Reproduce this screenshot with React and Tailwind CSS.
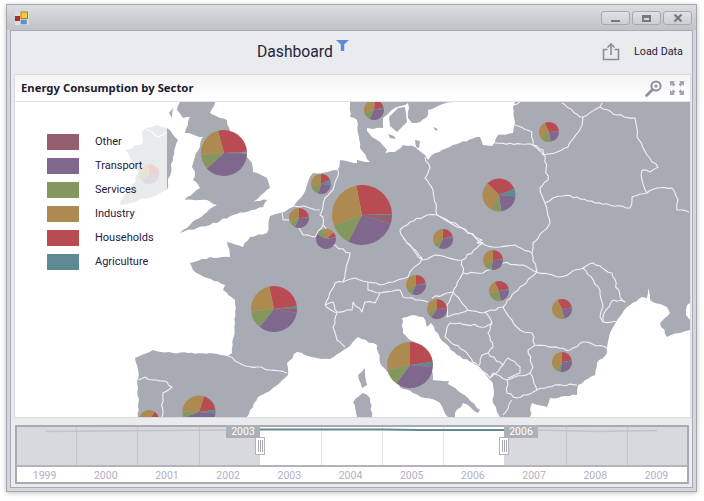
const C = { h: "#b94c53", a: "#5d8a92", o: "#955f70", t: "#7f678e", s: "#84975f", i: "#ad8a50" };

const pies = [
  [224, 153, 23, -15, [["h", 87], ["a", 89], ["o", 91], ["t", 228], ["s", 265], ["i", 345]]],
  [362, 215, 30, -11, [["h", 88], ["a", 90], ["o", 107], ["t", 207], ["s", 249], ["i", 349]]],
  [274, 309, 23, -12, [["h", 83], ["a", 90], ["o", 100], ["t", 219], ["s", 264], ["i", 348]]],
  [410, 365, 23, 0, [["h", 82], ["a", 93], ["o", 95], ["t", 216], ["s", 257], ["i", 360]]],
  [199, 412, 16.5, 18, [["h", 82], ["a", 95], ["t", 250], ["s", 272], ["i", 378]]],
  [149, 420, 10, 35, [["h", 110], ["t", 230], ["s", 270], ["i", 395]]],
  [499, 195, 16.5, -45, [["h", 68], ["a", 95], ["t", 172], ["s", 208], ["i", 315]]],
  [374, 110, 10, 5, [["h", 75], ["a", 88], ["t", 205], ["s", 255], ["i", 365]]],
  [321, 184, 10, 0, [["h", 65], ["a", 95], ["t", 195], ["s", 255], ["i", 360]]],
  [299, 218, 10, 0, [["h", 85], ["a", 90], ["t", 205], ["s", 245], ["i", 360]]],
  [326, 239, 10, -20, [["i", 50], ["h", 80], ["a", 82], ["t", 300], ["s", 340]]],
  [443, 239, 10, 0, [["h", 72], ["a", 78], ["t", 205], ["s", 245], ["i", 360]]],
  [416, 285, 10, 0, [["h", 80], ["a", 85], ["t", 205], ["s", 240], ["i", 360]]],
  [437, 309, 10, 0, [["h", 85], ["t", 215], ["s", 250], ["i", 360]]],
  [493, 260, 10, 0, [["h", 85], ["a", 88], ["t", 190], ["s", 240], ["i", 360]]],
  [499, 291, 10, -25, [["h", 80], ["a", 90], ["t", 170], ["s", 255], ["i", 335]]],
  [562, 309, 10, -25, [["h", 80], ["t", 165], ["s", 180], ["i", 335]]],
  [562, 362, 10, 0, [["h", 82], ["a", 90], ["t", 190], ["s", 215], ["i", 360]]],
  [549, 132, 10, -25, [["h", 85], ["t", 170], ["s", 230], ["i", 335]]],
  [149, 174, 10, -5, [["h", 90], ["t", 220], ["s", 270], ["i", 355]]],
];

function pt(cx, cy, r, deg) {
  const a = ((deg - 90) * Math.PI) / 180;
  return `${(cx + r * Math.cos(a)).toFixed(2)} ${(cy + r * Math.sin(a)).toFixed(2)}`;
}

function Pie({ p }) {
  const [cx, cy, r, start, parts] = p;
  let from = start;
  return (
    <g>
      {parts.map(([k, to], i) => {
        const d = `M${cx} ${cy}L${pt(cx, cy, r, from)}A${r} ${r} 0 ${to - from > 180 ? 1 : 0} 1 ${pt(cx, cy, r, to)}Z`;
        from = to;
        return <path key={i} d={d} fill={C[k]} />;
      })}
    </g>
  );
}

// Breaks each straight run of a coast or border into short wobbly pieces.
function rough(d, amp) {
  const nums = d.match(/-?\d+(\.\d+)?/g).map(Number);
  const closed = /Z\s*$/.test(d);
  const pts = [];
  for (let i = 0; i < nums.length; i += 2) pts.push([nums[i], nums[i + 1]]);
  if (closed) pts.push(pts[0]);
  const onEdge = (a, b) =>
    (a[0] >= 690 && b[0] >= 690) || (a[1] <= 102 && b[1] <= 102) || (a[1] >= 417 && b[1] >= 417);
  let seed = nums.length * 7 + nums[0];
  const rnd = () => {
    seed = (seed * 9301 + 49297) % 233280;
    return seed / 233280 - 0.5;
  };
  const out = [pts[0]];
  for (let i = 1; i < pts.length; i++) {
    const a = pts[i - 1];
    const b = pts[i];
    const dx = b[0] - a[0];
    const dy = b[1] - a[1];
    const len = Math.hypot(dx, dy);
    if (!onEdge(a, b) && len > 4) {
      const n = Math.floor(len / 3.5);
      for (let k = 1; k < n; k++) {
        const t = k / n;
        const off = rnd() * amp * 2;
        out.push([a[0] + dx * t - (dy / len) * off, a[1] + dy * t + (dx / len) * off]);
      }
    }
    out.push(b);
  }
  return "M" + out.map((p) => `${p[0].toFixed(1)} ${p[1].toFixed(1)}`).join("L") + (closed ? "Z" : "");
}

const land = [
  "M350 102L350 117 357 120 358 133 360 148 370 162 357 160 357 163 350 162 340 160 338 170 328 172 313 173 308 182 303 195 293 207 280 213 270 216 267 233 250 237 243 247 227 242 230 257 210 257 190 263 193 270 207 278 225 285 223 290 235 300 235 323 232 353 228 356 210 353 173 353 153 350 135 358 138 370 138 417 247 417 258 397 273 388 288 375 287 363 297 352 317 358 330 359 347 348 358 337 377 345 380 363 400 387 413 393 425 398 435 400 440 403 448 417 455 417 455 413 463 403 468 405 478 413 480 410 468 398 448 384 449 381 433 380 432 360 420 347 403 333 402 318 412 315 423 317 427 327 431 323 440 338 457 355 473 363 482 370 493 383 493 403 497 412 500 417 530 417 532 403 547 407 550 398 577 395 578 385 595 375 597 363 607 353 610 333 613 327 627 307 642 297 647 298 648 288 650 300 667 307 670 313 660 323 667 337 680 333 690 330 690 320 686 315 687 305 690 303 690 102Z",
  "M180 102L177 110 183 118 190 117 185 133 203 137 195 157 192 167 195 172 193 180 200 188 187 197 185 200 207 200 217 205 207 212 190 225 180 233 197 228 210 225 233 215 263 207 267 200 253 202 270 188 267 178 253 172 252 163 240 150 230 132 227 120 210 113 215 102Z",
  "M145 128L157 125 167 128 178 140 173 157 167 190 157 195 120 205 123 197 135 182 138 172 125 150 143 143 142 133Z",
  "M358 375L365 368 367 385 362 388Z",
  "M353 402L363 393 370 398 372 417 357 417Z",
  "M169 113L173 108 172 118Z",
];

const baltic =
  "M408 103L397 107 388 114 383 118 383 128 373 129 367 128 367 131 372 137 377 140 387 150 385 153 395 152 403 145 415 147 425 155 428 160 432 155 453 145 480 137 483 145 492 146 498 135 513 133 515 123 513 107 515 102 455 102 440 105 428 110 427 117 420 122 412 123 408 118 409 108Z";

const balticIslands = [
  "M389 117L398 108 405 107 407 122 397 132 390 126Z",
  "M388 134L394 136 396 139 390 138Z",
  "M415 140L420 141 419 148 416 147Z",
  "M433 127L438 129 436 131Z",
];

const borders = [
  "M338 170L337 178 333 190 325 198 323 207 320 215 323 217 323 225 327 232 328 243 350 253 345 277 343 282 335 283 325 305",
  "M293 206L307 207 320 210",
  "M282 213L283 220 290 220 298 227 303 235 315 237 323 225",
  "M343 282L355 278 368 282 380 285 393 282 408 277 410 272 420 263 422 258 407 243 403 237 400 230 410 222 427 215 437 215 457 227 462 228 483 243 477 248 462 260 435 255 423 260 418 257 403 237",
  "M325 305L333 302 337 312 352 310 353 302 362 312 365 302 375 303 380 293 400 290 403 297 420 300 428 302",
  "M368 282L368 290 380 293",
  "M325 305L337 313 333 327 337 340 345 347",
  "M425 157L430 167 425 178 433 190 437 215",
  "M440 217L455 223 460 227 482 240 477 243 485 245 493 247 500 247 515 245 532 253",
  "M495 143L533 145 543 150 548 180 540 188 545 203 550 223 533 243 532 253 537 272",
  "M462 260L463 273 483 273 503 263 523 265 537 272",
  "M463 273L453 292 468 310 483 313 503 307 520 287 537 272",
  "M537 272L560 277 583 268 593 263 612 273 620 297 625 302 613 300 603 317 603 322 617 322",
  "M583 268L600 290 603 307 600 317 603 322",
  "M503 307L512 320 520 330 532 333 535 345 570 350 583 342 607 348",
  "M535 345L528 350 533 367 530 373 537 390 555 385 577 385",
  "M530 373L507 380 507 393 517 398 537 390",
  "M512 400L503 415",
  "M485 312L492 323 488 333 493 347 488 353 503 365 508 358 520 367 520 373 508 378",
  "M447 327L450 323 460 323 485 327 492 323",
  "M447 327L445 337 467 353 478 367 482 355 488 353",
  "M478 367L490 378 503 365",
  "M490 378L493 373 507 380",
  "M453 293L447 305 447 317 468 310",
  "M432 298L447 293 453 292",
  "M515 125L532 132 533 145",
  "M513 105L520 102",
  "M562 103L580 117 583 117",
  "M602 103L600 107 583 117 582 125 568 147 557 152 543 155 533 145",
  "M600 107L617 115 635 118 637 137 647 155 658 167 650 172 642 170 642 180 647 193",
  "M545 203L553 198 563 196 577 197 595 203 610 205 630 208 632 197 647 193 657 188 672 188 678 200 677 210 689 212",
  "M228 356L243 365 257 367 270 370 287 373",
  "M138 380L145 377 153 380 167 382 172 387 163 393 162 417",
  "M144 127L158 137 167 132",
];

const legend = [
  ["Other", "bg-[#955f70]"],
  ["Transport", "bg-[#7f678e]"],
  ["Services", "bg-[#84975f]"],
  ["Industry", "bg-[#ad8a50]"],
  ["Households", "bg-[#b94c53]"],
  ["Agriculture", "bg-[#5d8a92]"],
];

const years = ["1999", "2000", "2001", "2002", "2003", "2004", "2005", "2006", "2007", "2008", "2009"];

function Thumb({ className }) {
  return (
    <div className={`absolute top-[10px] w-[10px] h-[18px] bg-white border border-[#b2b3ba] flex items-center justify-center gap-px ${className}`}>
      <span className="w-px h-[12px] bg-[#a8a9b0]" />
      <span className="w-px h-[12px] bg-[#a8a9b0]" />
      <span className="w-px h-[12px] bg-[#a8a9b0]" />
    </div>
  );
}

export default function App() {
  return (
    <div className="w-[704px] h-[501px] bg-white pt-[4px] pl-[6px]" style={{ fontFamily: 'Roboto, sans-serif' }}>
      <div className="w-[691px] h-[488px] border border-[#a5a7b0] bg-[#d6d7db] shadow-[0_1px_5px_rgba(0,0,0,0.25)] flex flex-col">
        <div className="h-[25px] shrink-0 bg-gradient-to-b from-[#dcdde0] to-[#c0c2c7] flex items-start justify-between pl-[8px] pr-[4px]">
          <svg width="14" height="14" viewBox="0 0 14 14" className="mt-[6px]">
            <rect x="0" y="0" width="14" height="14" fill="#dcdcde" />
            <rect x="0.5" y="5.5" width="4" height="4" fill="#c8241c" stroke="#8a3a30" strokeWidth="1" />
            <rect x="6" y="1" width="6.5" height="6.5" fill="#f4c93a" stroke="#a8802a" strokeWidth="1" />
            <rect x="6" y="9" width="5.5" height="4" fill="#4f94e0" stroke="#6a90c0" strokeWidth="0.6" />
          </svg>
          <div className="flex gap-[2px] mt-[6px]">
            {[0, 1, 2].map((i) => (
              <div key={i} className="w-[29px] h-[14px] rounded-[3px] border border-[#a6a8b0] bg-gradient-to-b from-[#e0e1e4] to-[#cdced3] flex items-center justify-center">
                {i === 0 && <span className="w-[9px] h-[2px] bg-[#777982] mt-[5px]" />}
                {i === 1 && <span className="w-[9px] h-[7px] border-2 border-[#777982] border-t-[3px]" />}
                {i === 2 && (
                  <svg width="10" height="8" viewBox="0 0 10 8">
                    <path d="M1.5 .5L8.5 7.5M8.5 .5L1.5 7.5" stroke="#777982" strokeWidth="2.2" />
                  </svg>
                )}
              </div>
            ))}
          </div>
        </div>

        <div className="flex-1 ml-[3px] mr-[3px] mb-[3px] border border-[#a9abb3] bg-[#eaebef] flex flex-col">
          <div className="h-[43px] shrink-0 relative flex items-start pl-[246px]">
            <span className="text-[15.7px] leading-[22px] text-[#25253a] mt-[10px]">Dashboard</span>
            <svg width="13" height="11" viewBox="0 0 13 11" className="ml-[3px] mt-[9px]">
              <path d="M0 0H13L8.2 4.6V11H4.8V4.6Z" fill="#5c8bdc" />
            </svg>
            <div className="absolute right-[9px] top-[12px] flex items-center">
              <svg width="18" height="18" viewBox="0 0 18 18" className="mr-[14px]">
                <path d="M5.5 6.5H1.5V16.5H16.5V6.5H12.5M9 12V1.5M5.5 4.5L9 1L12.5 4.5" fill="none" stroke="#8b8d96" strokeWidth="1.6" />
              </svg>
              <span className="text-[10.8px] leading-[18px] text-[#1f2040]">Load Data</span>
            </div>
          </div>

          <div className="h-[344px] shrink-0 ml-[3px] mr-[1px] border border-[#dcdde2] border-b-[#d8d9dd] bg-white flex flex-col">
            <div className="h-[27px] shrink-0 border-b border-[#e2e3e7] bg-gradient-to-b from-[#f4f4f6] to-white flex items-center justify-between pl-[6px] pr-[6px]">
              <span className="text-[11.3px] font-bold text-[#1c1c2e]" style={{ fontFamily: '"Noto Sans", sans-serif' }}>Energy Consumption by Sector</span>
              <div className="flex items-center gap-[8px]">
                <svg width="17" height="17" viewBox="0 0 17 17">
                  <circle cx="11" cy="6" r="4.6" fill="none" stroke="#8f9199" strokeWidth="2" />
                  <circle cx="11" cy="6" r="1.6" fill="#8f9199" />
                  <path d="M7.5 9.5L1.6 15.4" stroke="#8f9199" strokeWidth="2.8" strokeLinecap="round" />
                </svg>
                <svg width="14" height="14" viewBox="0 0 14 14">
                  <path d="M0 0H5L3.6 1.6 5.4 3.4 3.4 5.4 1.6 3.6 0 5ZM14 0V5L12.4 3.6 10.6 5.4 8.6 3.4 10.4 1.6 9 0ZM0 14V9L1.6 10.4 3.4 8.6 5.4 10.6 3.6 12.4 5 14ZM14 14H9L10.4 12.4 8.6 10.6 10.6 8.6 12.4 10.4 14 9Z" fill="#a3a5ad" />
                </svg>
              </div>
            </div>
            <div className="relative h-[315px] overflow-hidden">
              <svg width="675" height="315" viewBox="15 102 675 315" className="block">
                {land.map((d, i) => (
                  <path key={i} d={rough(d, 1)} fill="#a8aab4" />
                ))}
                <path d={rough(baltic, 1)} fill="#fff" />
                {balticIslands.map((d, i) => (
                  <path key={i} d={d} fill="#a8aab4" />
                ))}
                {borders.map((d, i) => (
                  <path key={i} d={rough(d, 1.1)} fill="none" stroke="#f2f2f5" strokeWidth="1.1" strokeLinejoin="round" />
                ))}
                {pies.map((p, i) => (
                  <Pie key={i} p={p} />
                ))}
              </svg>
              <div className="absolute left-[17px] top-[15px] w-[135px] h-[172px] bg-white/75 pt-[17px] pl-[15px] flex flex-col gap-[8px]">
                {legend.map(([name, cls]) => (
                  <div key={name} className="flex items-center h-[16px]">
                    <span className={`w-[32px] h-[16px] shrink-0 ${cls}`} />
                    <span className="ml-[16px] text-[11px] leading-[14px] text-[#1f2040] whitespace-nowrap">{name}</span>
                  </div>
                ))}
              </div>
            </div>
          </div>

          <div className="mt-[7px] ml-[4px] mr-[3px] h-[59px] shrink-0 border-2 border-[#a8aab2] bg-white flex flex-col">
            <div className="relative h-[40px] shrink-0 border-b-2 border-[#b3b4bb] flex">
              <div className="w-[243px] shrink-0 bg-[#d8d9dd]" />
              <div className="w-[244px] shrink-0 bg-white" />
              <div className="flex-1 bg-[#d8d9dd]" />
              <svg width="670" height="38" viewBox="17 427 670 38" className="absolute left-0 top-0">
                {[76, 137, 199, 566, 627].map((x) => (
                  <path key={x} d={`M${x + 0.5} 427V465`} stroke="#c5c6cb" />
                ))}
                {[321, 382, 443].map((x) => (
                  <path key={x} d={`M${x + 0.5} 427V465`} stroke="#e3e4e7" />
                ))}
                <path d="M46 431.5L226 430" stroke="#c2c3c8" strokeWidth="1.6" fill="none" />
                <path d="M260 429.5L321 429.5 382 429.5 420 430 504 430" stroke="#5d8a92" strokeWidth="2" fill="none" />
                <path d="M538 430L596 431.5 657 430.5" stroke="#c2c3c8" strokeWidth="1.6" fill="none" />
              </svg>
              <div className="absolute left-[209px] -top-[2px] w-[34px] h-[13px] bg-[#aeb0b7] text-white text-[10.5px] leading-[13px] text-center">2003</div>
              <div className="absolute left-[487px] -top-[2px] w-[34px] h-[13px] bg-[#aeb0b7] text-white text-[10.5px] leading-[13px] text-center">2006</div>
              <Thumb className="left-[238px]" />
              <Thumb className="left-[482px]" />
            </div>
            <div className="flex-1 flex -ml-[3px]">
              {years.map((y) => (
                <span key={y} className="w-[61.2px] shrink-0 text-center text-[10.5px] leading-[17px] text-[#b3afc2]">{y}</span>
              ))}
            </div>
          </div>
        </div>
      </div>
    </div>
  );
}
